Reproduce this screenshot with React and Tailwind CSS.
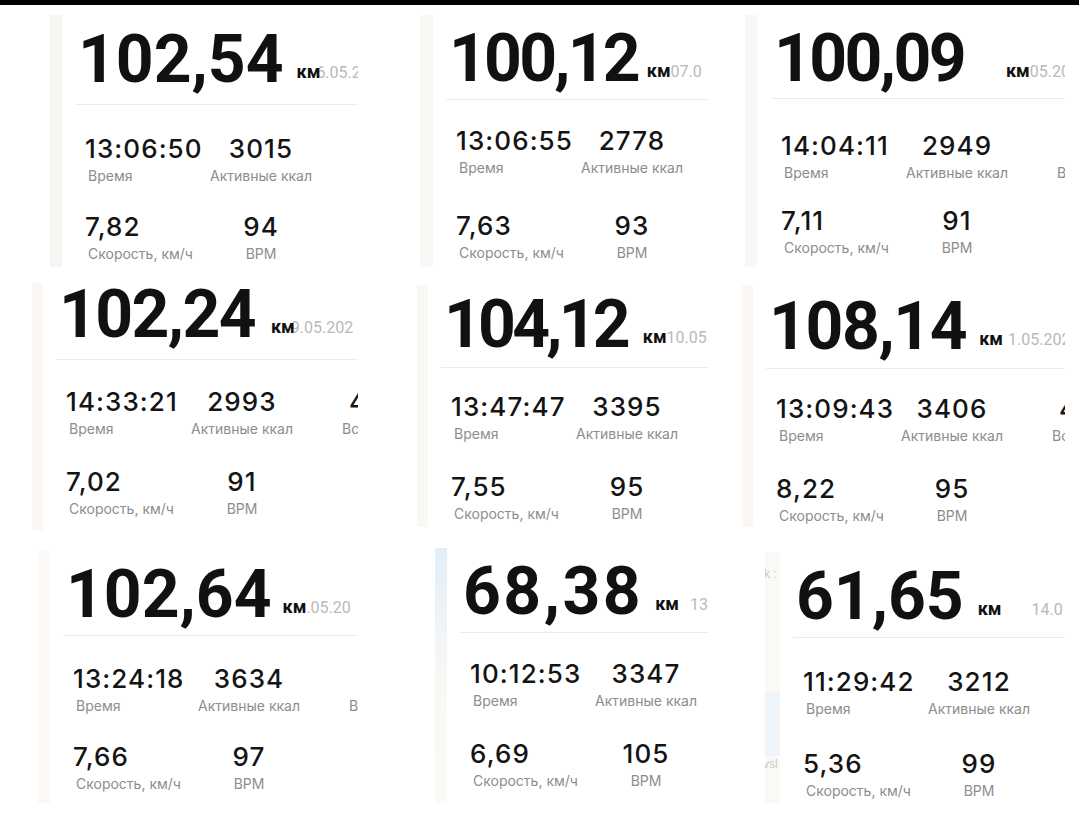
import React from 'react';

const tiles = [
  {
    dist: '102,54', date: '6.05.2', time: '13:06:50', kcal: '3015', speed: '7,82', bpm: '94', extra: '',
    box: 'ml-[50px] mt-[10px] w-[308px] h-[252px]', strip: 'w-[12px] bg-[#f8f6f3]', track: 'tracking-normal',
    num: 'mt-[12px]', km: 'ml-[13px]', dateCls: '-ml-[4px]', div: 'mt-[11px]', rows: 'mt-[31px]', gap: 'mt-[31px]',
  },
  {
    dist: '100,12', date: '07.0', time: '13:06:55', kcal: '2778', speed: '7,63', bpm: '93', extra: '',
    box: 'ml-[62px] mt-[10px] w-[288px] h-[252px]', strip: 'w-[13px] bg-[#f9f7f4]', track: 'tracking-[-2.8px]',
    num: 'mt-[11px]', km: 'ml-[9px]', dateCls: 'ml-0', div: 'mt-[7px]', rows: 'mt-[28px]', gap: 'mt-[38px]',
  },
  {
    dist: '100,09', date: '05.20', time: '14:04:11', kcal: '2949', speed: '7,11', bpm: '91', extra: '',
    box: 'ml-[37px] mt-[10px] w-[320px] h-[252px]', strip: 'w-[13px] bg-[#faf8f5]', track: 'tracking-[-2.6px]',
    num: 'mt-[11px]', km: 'ml-[42px]', dateCls: 'ml-0', div: 'mt-[6px]', rows: 'mt-[34px]', gap: 'mt-[28px]',
  },
  {
    dist: '102,24', date: '9.05.202', time: '14:33:21', kcal: '2993', speed: '7,02', bpm: '91', extra: '4',
    box: 'ml-[32px] mt-[5px] w-[326px] h-[247px]', strip: 'w-[11px] bg-[#fbf7f4]', track: 'tracking-[-1.6px]',
    num: '-mt-[1px]', km: 'ml-[16px]', dateCls: '-ml-[4px]', div: 'mt-[11px]', rows: 'mt-[29px]', gap: 'mt-[33px]',
  },
  {
    dist: '104,12', date: '10.05', time: '13:47:47', kcal: '3395', speed: '7,55', bpm: '95', extra: '',
    box: 'ml-[59px] mt-[7px] w-[291px] h-[242px]', strip: 'w-[11px] bg-[#f9f8f5]', track: 'tracking-[-3.8px]',
    num: 'mt-[7px]', km: 'ml-[16px]', dateCls: 'ml-0', div: 'mt-[9px]', rows: 'mt-[26px]', gap: 'mt-[33px]',
  },
  {
    dist: '108,14', date: '1.05.202', time: '13:09:43', kcal: '3406', speed: '8,22', bpm: '95', extra: '4',
    box: 'ml-[34px] mt-[7px] w-[323px] h-[242px]', strip: 'w-[11px] bg-[#faf7f4]', track: 'tracking-[-1.4px]',
    num: 'mt-[9px]', km: 'ml-[13px]', dateCls: 'ml-[5px]', div: 'mt-[8px]', rows: 'mt-[27px]', gap: 'mt-[33px]',
  },
  {
    dist: '102,64', date: '.05.20', time: '13:24:18', kcal: '3634', speed: '7,66', bpm: '97', extra: '',
    box: 'ml-[38px] mt-[5px] w-[320px] h-[253px]', strip: 'w-[12px] bg-[#fbf8f5]', track: 'tracking-normal',
    num: 'mt-[12px]', km: 'ml-[11px]', dateCls: 'ml-0', div: 'mt-[7px]', rows: 'mt-[30px]', gap: 'mt-[31px]',
  },
  {
    dist: '68,38', date: '13', time: '10:12:53', kcal: '3347', speed: '6,69', bpm: '105', extra: '',
    box: 'ml-[77px] mt-[3px] w-[273px] h-[255px]', strip: 'w-[12px] bg-gradient-to-b from-[#e2eef9] via-[#f8f8f4] to-[#fbf9f6]', track: 'tracking-[2.5px]',
    num: 'mt-[11px]', km: 'ml-[12px]', dateCls: 'ml-[11px]', div: 'mt-[7px]', rows: 'mt-[28px]', gap: 'mt-[33px]',
    map: false,
  },
  {
    dist: '61,65', date: '14.0', time: '11:29:42', kcal: '3212', speed: '5,36', bpm: '99', extra: '',
    box: 'ml-[57px] mt-[7px] w-[300px] h-[251px]', strip: 'w-[15px] bg-[#fbf9f5]', track: 'tracking-normal',
    num: 'mt-[12px]', km: 'ml-[14px]', dateCls: 'ml-[30px]', div: 'mt-[7px]', rows: 'mt-[31px]', gap: 'mt-[35px]',
    map: true,
  },
];

const MapStrip = () => (
  <div className="flex flex-col h-full pt-[16px] text-[12px] leading-none text-[#c9c9c9] font-['Liberation_Sans',sans-serif]">
    <span className="-ml-[1px]">k :</span>
    <div className="mt-[112px] h-[64px] bg-[#eef5fb]" />
    <span className="mt-[2px] -ml-[2px]">vsl</span>
  </div>
);

const Stat = ({ value, label, center, indent }) => (
  <div className={`flex flex-col ${center ? 'items-center' : 'items-start'}`}>
    <span className="text-[26px] leading-none font-medium tracking-[1.1px] text-[#141414]">{value}</span>
    <span className={`mt-[7px] text-[14px] leading-none text-[#8d8d8d] ${indent ? 'pl-[3px]' : ''}`}>{label}</span>
  </div>
);

const Tile = ({ t }) => (
  <div className={`${t.box} flex overflow-hidden bg-white shrink-0`}>
    <div className={`${t.strip} shrink-0 h-full overflow-hidden`}>{t.map && <MapStrip />}</div>
    <div className="flex-1 min-w-0 flex flex-col">
      {/* distance header */}
      <div className={`${t.num} flex items-end pl-[16px] whitespace-nowrap font-['Roboto',sans-serif]`}>
        <span className={`${t.track} text-[66px] leading-none font-bold text-[#111] shrink-0`}>{t.dist}</span>
        <span className={`${t.km} pb-[12px] relative z-10 text-[18px] leading-none font-bold text-[#111] shrink-0`}>км</span>
        <span className={`${t.dateCls} pb-[12px] text-[16px] leading-none text-[#b9b9b9] shrink-0`}>{t.date}</span>
      </div>
      <div className={`${t.div} ml-[13px] h-px bg-[#ebebeb]`} />

      {/* stats */}
      <div className={`${t.rows} ml-[23px] font-['Inter',sans-serif] whitespace-nowrap`}>
        <div className="grid grid-cols-[106px_140px_140px]">
          <Stat value={t.time} label="Время" indent />
          <Stat value={t.kcal} label="Активные ккал" center />
          <div className="flex flex-col items-start pl-[30px]">
            <span className="pl-[7px] h-[26px] text-[26px] leading-none font-medium text-[#141414]">{t.extra}</span>
            <span className="mt-[7px] text-[14px] leading-none text-[#8d8d8d]">Всего ккал</span>
          </div>
        </div>
        <div className={`${t.gap} grid grid-cols-[106px_140px]`}>
          <Stat value={t.speed} label="Скорость, км/ч" indent />
          <Stat value={t.bpm} label="BPM" center />
        </div>
      </div>
    </div>
  </div>
);

export default function App() {
  return (
    <div className="w-[1079px] h-[815px] bg-white overflow-hidden flex flex-col">
      <div className="h-[5px] bg-black shrink-0" />
      <div className="h-[273px] flex items-start shrink-0">
        {tiles.slice(0, 3).map((t, i) => <Tile key={i} t={t} />)}
      </div>
      <div className="h-[267px] flex items-start shrink-0">
        {tiles.slice(3, 6).map((t, i) => <Tile key={i} t={t} />)}
      </div>
      <div className="h-[270px] flex items-start shrink-0">
        {tiles.slice(6, 9).map((t, i) => <Tile key={i} t={t} />)}
      </div>
    </div>
  );
}
